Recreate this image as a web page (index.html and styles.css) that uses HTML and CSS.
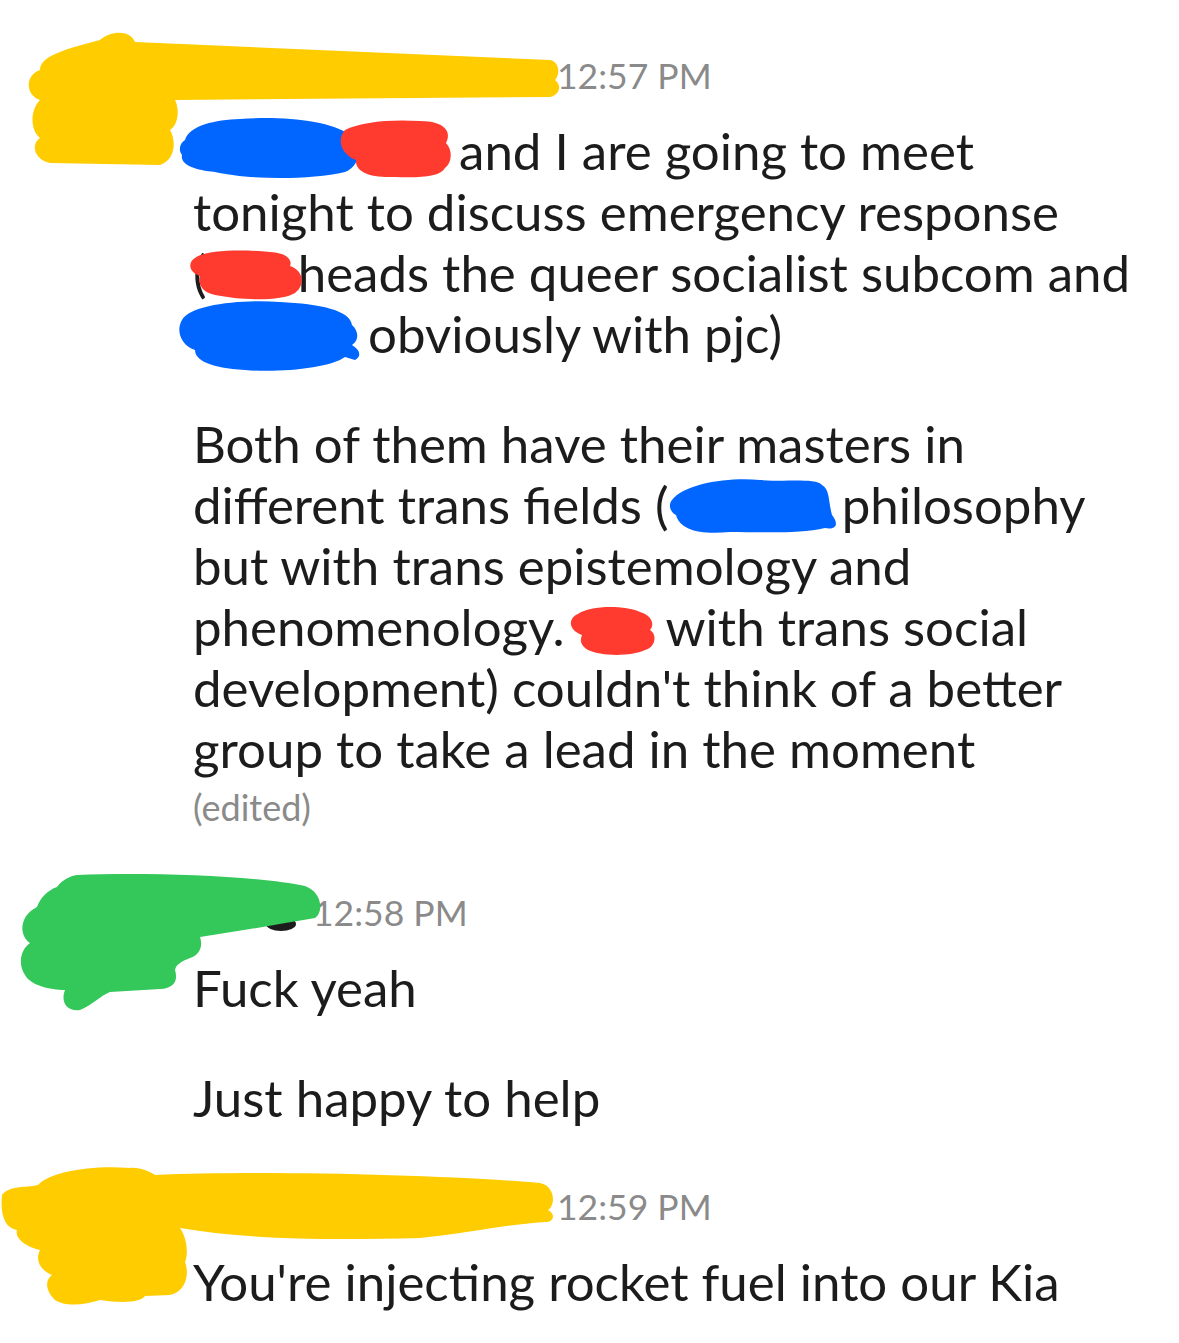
FILE: index.html
```html
<!DOCTYPE html>
<html lang="en">

<head>
    <meta charset="UTF-8">
    <meta name="viewport" content="width=device-width, initial-scale=1.0">
    <title>Messages</title>
    <link rel="stylesheet" href="styles.css">
</head>

<body>
    <div id="chat">
        <div class="msg">
            <div class="avatar"></div>
            <div class="content">
                <div class="meta"><span class="name name-long"></span><span class="time">12:57 PM</span></div>
                <p><span class="hide hide-a"></span> and I are going to meet<br>
                    tonight to discuss emergency response<br>
                    (<span class="hide hide-b"></span> heads the queer socialist subcom and<br>
                    <span class="hide hide-c"></span> obviously with pjc)</p>
                <p>Both of them have their masters in<br>
                    different trans fields (<span class="hide hide-d"></span> philosophy<br>
                    but with trans epistemology and<br>
                    phenomenology. <span class="hide hide-e"></span> with trans social<br>
                    development) couldn't think of a better<br>
                    group to take a lead in the moment</p>
                <div class="edited">(edited)</div>
            </div>
        </div>
        <div class="msg">
            <div class="avatar"></div>
            <div class="content">
                <div class="meta"><span class="name name-short"></span><span class="time">12:58 PM</span></div>
                <p>Fuck yeah</p>
                <p>Just happy to help</p>
            </div>
        </div>
        <div class="msg">
            <div class="avatar"></div>
            <div class="content">
                <div class="meta"><span class="name name-long"></span><span class="time">12:59 PM</span></div>
                <p>You're injecting rocket fuel into our Kia</p>
            </div>
        </div>
    </div>

    <!-- marker scribbles drawn over names -->
    <svg id="scribbles" width="1179" height="1343" viewBox="0 0 1179 1343">
        <g class="ink">
            <path d="M44 124 L54 128 L50 138 Z" />
            <ellipse cx="281" cy="924" rx="15" ry="7" />
        </g>
        <g class="yellow">
            <path d="M40 70 C40 55 70 48 100 40 C112 30 130 30 135 42 L550 60 C560 62 560 75 555 80 C562 85 560 95 550 97 L175 100 C180 110 178 125 170 130 C176 140 176 160 160 165 L50 163 C35 160 30 145 40 138 C30 130 30 110 40 100 C25 95 25 75 40 70 Z" />
            <path d="M2 1195 C10 1185 25 1188 38 1185 C50 1172 90 1165 130 1168 C140 1167 150 1172 155 1175 C260 1170 450 1175 540 1183 C555 1186 556 1205 548 1210 C556 1214 554 1222 545 1222 C500 1225 470 1233 420 1238 C330 1240 250 1240 180 1228 C188 1240 188 1255 185 1262 C190 1275 185 1292 170 1295 L145 1296 C140 1303 120 1303 100 1300 C85 1305 65 1307 55 1300 C45 1290 45 1280 52 1275 C40 1270 35 1260 40 1250 C20 1245 15 1235 17 1230 C5 1228 0 1215 2 1195 Z" />
        </g>
        <g class="blue">
            <path d="M185 140 C190 125 215 120 240 119 C280 116 330 120 350 135 C362 145 362 165 345 172 C310 180 250 180 215 172 C195 170 180 165 182 155 C178 150 180 143 185 140 Z" />
            <path d="M182 320 C190 305 240 299 280 302 C320 304 350 310 352 325 C358 330 360 340 352 345 C360 350 362 356 355 360 L345 357 C330 368 280 373 245 370 C210 368 195 360 195 350 C180 345 176 330 182 320 Z" />
            <path d="M672 500 C685 483 730 477 760 480 C790 482 815 478 822 485 C830 490 828 500 832 515 C840 525 835 530 825 528 C800 534 760 532 730 532 C700 535 680 530 676 515 C670 512 668 505 672 500 Z" />
        </g>
        <g class="red">
            <path d="M345 130 C360 122 390 119 420 121 C445 121 452 132 446 143 C453 150 452 163 445 168 C440 177 420 178 395 177 C370 178 355 172 356 160 C342 155 336 140 345 130 Z" />
            <path d="M195 258 C205 250 240 249 270 252 C290 253 292 262 290 266 C303 270 306 285 295 293 C280 302 240 300 215 295 C200 292 198 282 200 276 C188 272 188 262 195 258 Z" />
            <path d="M578 614 C590 605 625 605 640 612 C652 615 655 625 650 630 C658 635 655 648 645 650 C630 657 600 656 588 650 C580 645 580 640 582 635 C568 630 568 618 578 614 Z" />
        </g>
        <g class="green">
            <path d="M77 875 C150 872 260 876 305 886 C322 892 324 912 315 918 C280 924 240 931 200 937 C203 946 200 955 190 958 C180 962 176 965 175 970 C178 980 175 988 160 989 L110 992 C100 996 92 1005 80 1010 C68 1012 60 1003 65 990 C50 990 30 985 25 975 C18 965 20 950 30 943 C18 935 20 915 37 907 C40 898 48 890 57 887 C62 880 70 876 77 875 Z" />
        </g>
    </svg>
</body>

</html>
```

FILE: styles.css
```css
* {
    margin: 0;
    padding: 0;
}

body {
    background: #fff;
    color: #1d1c1d;
    font-family: Lato, "Noto Sans", sans-serif;
    position: relative;
}

#chat {
    padding: 52px 30px 0 24px;
}

.msg {
    display: grid;
    grid-template-columns: 145px 1fr;
    column-gap: 24px;
    margin-bottom: 55.5px;
}

.avatar {
    width: 145px;
}

.meta {
    height: 48px;
    line-height: 48px;
    margin-bottom: 20px;
    display: flex;
    align-items: center;
}

.name {
    display: inline-block;
    height: 40px;
    margin-right: 7px;
}

.name-long {
    width: 357px;
}

.name-short {
    width: 113px;
}

.time {
    font-size: 35.5px;
    color: #8a8a8a;
}

.content p {
    font-size: 51px;
    line-height: 61px;
}

.content p + p {
    margin-top: 49px;
}

.edited {
    font-size: 36px;
    line-height: 52px;
    margin-top: 2px;
    color: #8a8a8a;
}

.hide {
    display: inline-block;
    height: 0.6em;
    vertical-align: middle;
}

.hide-a {
    width: 253px;
}

.hide-b {
    width: 78px;
}

.hide-c {
    width: 162px;
}

.hide-d {
    width: 160px;
}

.hide-e {
    width: 76px;
}

#scribbles {
    position: absolute;
    left: 0;
    top: 0;
    pointer-events: none;
}

.ink {
    fill: #1d1c1d;
}

.yellow {
    fill: #ffcc00;
}

.blue {
    fill: #0066ff;
}

.red {
    fill: #ff3b30;
}

.green {
    fill: #34c759;
}
```
